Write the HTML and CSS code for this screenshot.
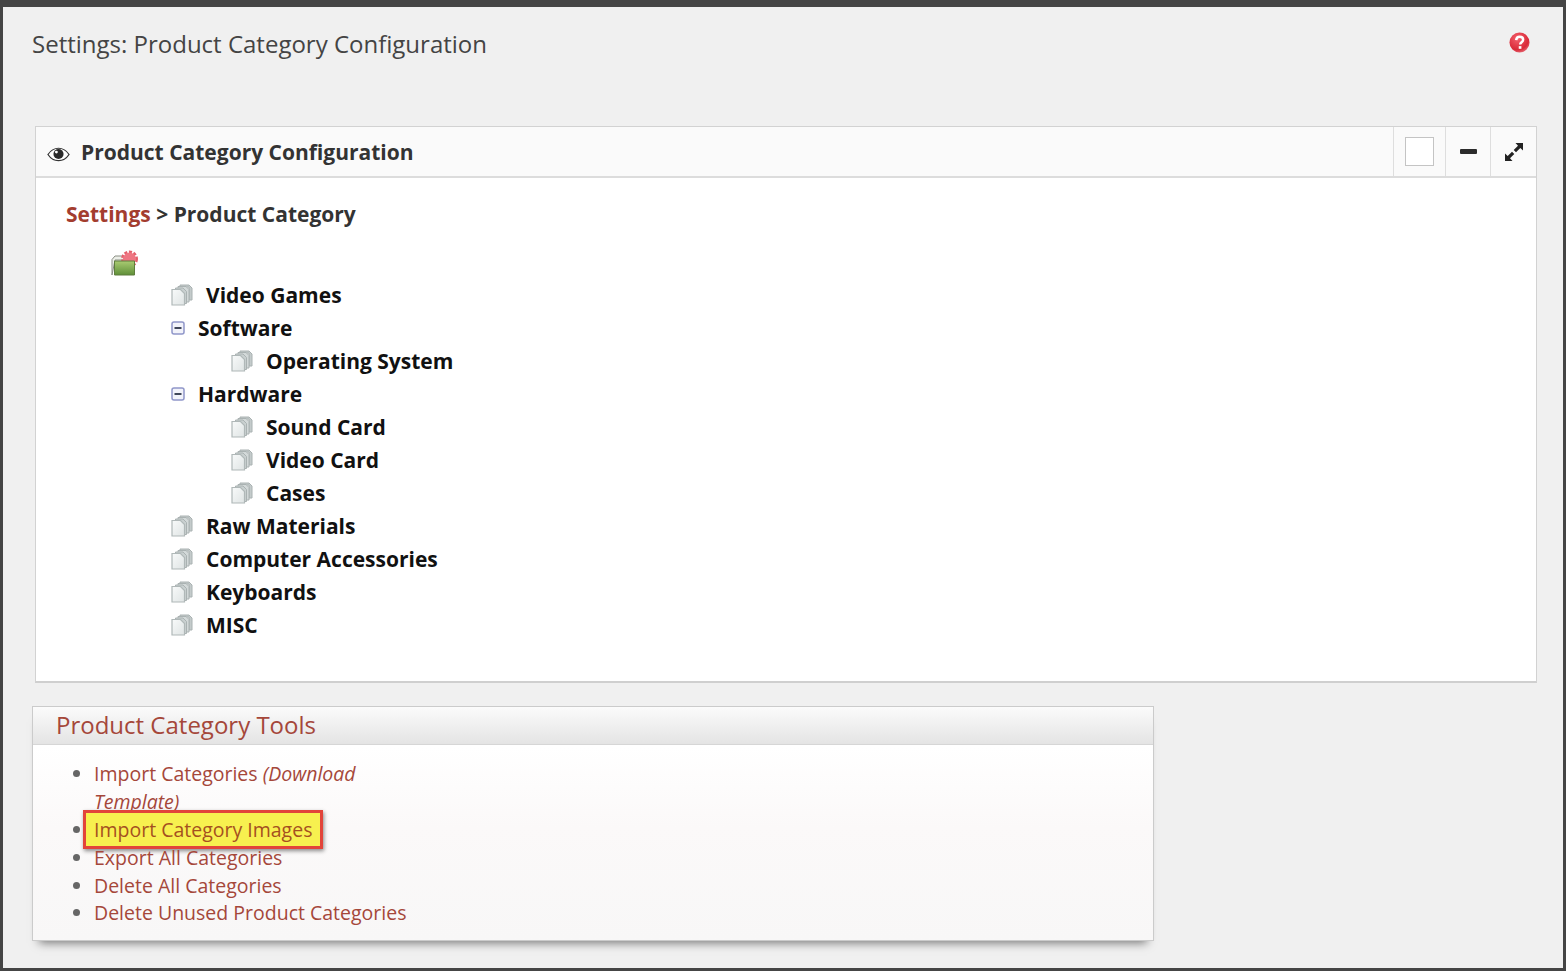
FILE: index.html
```html
<!DOCTYPE html>
<html lang="en">
<head>
<meta charset="utf-8">
<title>Settings: Product Category Configuration</title>
<link rel="stylesheet" href="styles.css">
</head>
<body>
<svg class="defs" width="0" height="0" aria-hidden="true">
  <defs>
    <linearGradient id="sheet" x1="0" y1="0" x2="1" y2="1"><stop offset="0" stop-color="#f8fafa"/><stop offset="1" stop-color="#dfe4e4"/></linearGradient>
    <symbol id="pages" viewBox="0 0 22 22">
      <path d="M9 1h9l3 3v12h-3V3H9z" fill="#c4cbcb" stroke="#aab2b2"/>
      <path d="M7 2.500h8l3 3V18H7z" fill="#d3d9d9" stroke="#aab2b2"/>
      <path d="M4.500 4h7.500l3.500 3.500V19.500H4.500z" fill="#c9d0d0" stroke="#aab2b2"/>
      <path d="M1 5.500h8.500l4 4V21H1z" fill="url(#sheet)" stroke="#b0b8b8" stroke-width="1.200"/>
    </symbol>
    <symbol id="minus" viewBox="0 0 14 14">
      <rect x="1" y="1" width="12" height="12" rx="2" fill="#f2f3fa" stroke="#9097c9" stroke-width="1.500"/>
      <rect x="3.500" y="6" width="7" height="2" fill="#3f4658"/>
    </symbol>
  </defs>
</svg>
<div class="frame">
  <header class="page-head">
    <h1 class="page-title">Settings: Product Category Configuration</h1>
    <svg class="help" viewBox="0 0 22 22" aria-hidden="true">
      <defs><radialGradient id="ball" cx=".4" cy=".3" r=".8"><stop offset="0" stop-color="#f4606d"/><stop offset=".7" stop-color="#d92a38"/><stop offset="1" stop-color="#e9808a"/></radialGradient></defs>
      <circle cx="11" cy="11" r="10.500" fill="url(#ball)"/>
      <path d="M7.500 8.500C7.800 6 9.300 5 11.200 5c2.200 0 3.600 1.300 3.600 3 0 2.600-3.100 2.700-3.100 5" fill="none" stroke="#fff" stroke-width="2.600"/>
      <rect x="10.200" y="14.800" width="2.800" height="2.800" fill="#fff"/>
    </svg>
  </header>

  <section class="panel">
    <div class="panel-head">
      <svg class="eye" viewBox="0 0 24 16" aria-hidden="true">
        <path d="M1 8.500C4 4 8 2 12 2s8 2 11 6.500C20 13 16 15 12 15S4 13 1 8.500z" fill="#fff" stroke="#333" stroke-width="1.300"/>
        <circle cx="12" cy="8" r="5.300" fill="#2a2a2a"/>
        <circle cx="9.800" cy="6" r="1.500" fill="#fff"/>
      </svg>
      <h2 class="panel-title">Product Category Configuration</h2>
      <div class="panel-tools">
        <div class="tool tool-check"><span class="checkbox"></span></div>
        <div class="tool tool-min"><span class="dash"></span></div>
        <div class="tool tool-max">
          <svg class="expand" viewBox="0 0 20 20" aria-hidden="true">
            <path d="M11.500 1h7.500v7.500L16.300 6 12 10.300 9.700 8 14 3.700z" fill="#222"/>
            <path d="M8.500 19H1v-7.500L3.700 14 8 9.700l2.300 2.300L6 16.300z" fill="#222"/>
          </svg>
        </div>
      </div>
    </div>
    <div class="panel-body">
      <p class="crumb"><a class="crumb-link">Settings</a> &gt; Product Category</p>
      <svg class="root-icon" viewBox="0 0 28 26" aria-hidden="true">
        <defs><linearGradient id="fold" x1="0" y1="0" x2="0" y2="1"><stop offset="0" stop-color="#a9cb72"/><stop offset="1" stop-color="#5f8f38"/></linearGradient></defs>
        <path d="M1 25V9.500L4 6h9v4H4z" fill="#ecefe8" stroke="#8b8f85"/>
        <circle cx="18.500" cy="9" r="7" fill="none" stroke="#e4606c" stroke-width="3" stroke-dasharray="3 1.600"/>
        <circle cx="18.500" cy="9" r="6.500" fill="#ee7682"/>
        <path d="M3.500 11h20v14h-20z" fill="url(#fold)" stroke="#5e7d3d"/>
      </svg>
      <ul class="tree">
        <li class="node"><svg class="pages"><use href="#pages"/></svg><span class="label">Video Games</span></li>
        <li class="node node-open"><svg class="minus"><use href="#minus"/></svg><span class="label">Software</span></li>
        <li class="node node-child"><svg class="pages"><use href="#pages"/></svg><span class="label">Operating System</span></li>
        <li class="node node-open"><svg class="minus"><use href="#minus"/></svg><span class="label">Hardware</span></li>
        <li class="node node-child"><svg class="pages"><use href="#pages"/></svg><span class="label">Sound Card</span></li>
        <li class="node node-child"><svg class="pages"><use href="#pages"/></svg><span class="label">Video Card</span></li>
        <li class="node node-child"><svg class="pages"><use href="#pages"/></svg><span class="label">Cases</span></li>
        <li class="node"><svg class="pages"><use href="#pages"/></svg><span class="label">Raw Materials</span></li>
        <li class="node"><svg class="pages"><use href="#pages"/></svg><span class="label">Computer Accessories</span></li>
        <li class="node"><svg class="pages"><use href="#pages"/></svg><span class="label">Keyboards</span></li>
        <li class="node"><svg class="pages"><use href="#pages"/></svg><span class="label">MISC</span></li>
      </ul>
    </div>
  </section>

  <section class="tools">
    <h2 class="tools-head">Product Category Tools</h2>
    <ul class="tools-list">
      <li><a class="tool-link">Import Categories <em>(Download Template)</em></a></li>
      <li><a class="tool-link tool-mark">Import Category Images</a></li>
      <li><a class="tool-link">Export All Categories</a></li>
      <li><a class="tool-link">Delete All Categories</a></li>
      <li><a class="tool-link">Delete Unused Product Categories</a></li>
    </ul>
  </section>
</div>
</body>
</html>
```
FILE: styles.css
```css
* { box-sizing: border-box; }
html, body { margin: 0; padding: 0; }
body {
  width: 1566px;
  height: 971px;
  overflow: hidden;
  font-family: "Open Sans", "Liberation Sans", sans-serif;
  color: #333;
}
.defs { position: absolute; }
.frame {
  height: 971px;
  background: #f0f0f0;
  border-style: solid;
  border-color: #454545;
  border-width: 7px 3px 3px 3px;
  padding: 0 26px 0 29px;
}
.page-head {
  display: flex;
  justify-content: space-between;
  align-items: flex-start;
  height: 119px;
}
.page-title {
  margin: 19px 0 0;
  font-size: 24px;
  line-height: 36px;
  font-weight: 400;
  color: #444;
}
.help { width: 21px; height: 21px; margin: 25px 7px 0 0; }

.panel {
  margin-left: 3px;
  height: 557px;
  background: #fff;
  border: 1px solid #d2d2d2;
  border-bottom: 2px solid #cfcfcf;
}
.panel-head {
  display: flex;
  align-items: center;
  height: 51px;
  background: #fafafa;
  border-bottom: 2px solid #dcdcdc;
}
.eye { width: 23px; height: 16px; margin: 4px 0 0 11px; }
.panel-title {
  margin: 0 0 0 11px;
  flex: 1;
  font-size: 21px;
  font-weight: 700;
  color: #333;
}
.panel-tools { display: flex; height: 49px; }
.tool {
  display: flex;
  align-items: center;
  justify-content: center;
  border-left: 1px solid #dedede;
}
.tool-check { width: 52px; }
.tool-min { width: 45px; }
.tool-max { width: 46px; }
.checkbox { width: 29px; height: 29px; background: #fff; border: 1px solid #c4c4c4; }
.dash { width: 17px; height: 5px; background: #2b2b2b; border-radius: 1px; }
.expand { width: 20px; height: 20px; }

.panel-body { padding: 20px 30px 0; }
.crumb {
  margin: 0;
  font-size: 21px;
  line-height: 33px;
  font-weight: 700;
  color: #333;
}
.crumb-link { color: #a33d2f; }
.root-icon { display: block; width: 28px; height: 26px; margin: 19px 0 0 45px; }
.tree { list-style: none; margin: 2px 0 0; padding: 0 0 0 105px; }
.node {
  display: flex;
  align-items: center;
  height: 33px;
  font-size: 21px;
  font-weight: 700;
  color: #111;
}
.node-child { padding-left: 60px; }
.pages { width: 22px; height: 22px; margin-right: 13px; }
.minus { width: 14px; height: 14px; margin-right: 13px; }

.tools {
  margin-top: 23px;
  width: 1122px;
  height: 235px;
  background: linear-gradient(#fff 40px, #fbf9f9 120px, #f8f7f7);
  border: 1px solid #cbcbcb;
  box-shadow: 0 9px 9px -7px rgba(0, 0, 0, .5);
}
.tools-head {
  margin: 0;
  height: 38px;
  padding-left: 23px;
  font-size: 24px;
  line-height: 36px;
  font-weight: 400;
  color: #a5473a;
  background: linear-gradient(#fbfbfb, #e4e4e4);
  border-bottom: 1px solid #d6d6d6;
}
.tools-list {
  list-style: disc;
  width: 344px;
  margin: 15.400px 0 0;
  padding: 0 0 0 61px;
  font-size: 19.500px;
  line-height: 27.800px;
  color: #666;
}
.tools-list li:nth-child(n+2) { width: 500px; }
.tool-link { color: #a5473a; }
.tool-mark {
  margin-left: -11px;
  padding: 3px 8px;
  background: #f7f04f;
  border: 3px solid #e2443a;
  box-shadow: 1px 2px 4px rgba(0, 0, 0, .45);
  color: #a5501f;
}
```
